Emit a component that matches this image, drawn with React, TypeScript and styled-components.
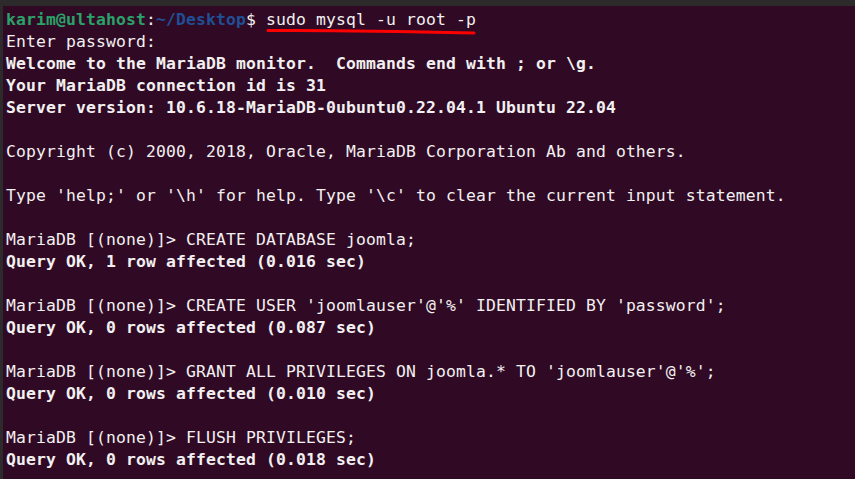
import React from "react";
import styled, { createGlobalStyle } from "styled-components";

const GlobalStyle = createGlobalStyle`
  html, body {
    margin: 0;
    padding: 0;
    background: #300a24;
    overflow: hidden;
  }
`;

const Window = styled.div`
  width: 855px;
  height: 479px;
  display: flex;
  flex-direction: column;
  background: #2b2b2b;
  overflow: hidden;
`;

const TopBar = styled.div`
  height: 6px;
  flex-shrink: 0;
  background: #2c2a2b;
`;

const Screen = styled.div`
  flex: 1;
  margin-left: 3px;
  padding: 3px 0 0 3px;
  background: #300a24;
  font-family: "DejaVu Sans Mono", "Liberation Mono", monospace;
  font-size: 16.4px;
  letter-spacing: 0.13px;
  line-height: 22px;
  color: #f2f0f0;
  white-space: pre;
`;

const Line = styled.div<{ $bold?: boolean }>`
  height: 22px;
  font-weight: ${(p) => (p.$bold ? 700 : 400)};
`;

const PromptLine = styled.div`
  position: relative;
  height: 22px;
`;

const User = styled.span`
  color: #2aa269;
  font-weight: 700;
`;

const Path = styled.span`
  color: #1f4f96;
  font-weight: 700;
`;

const Mark = styled.svg`
  position: absolute;
  left: 256px;
  top: 18px;
  overflow: visible;
`;

type Row = { text: string; bold?: boolean };

const rows: Row[] = [
  { text: "Enter password:" },
  { text: "Welcome to the MariaDB monitor.  Commands end with ; or \\g.", bold: true },
  { text: "Your MariaDB connection id is 31", bold: true },
  { text: "Server version: 10.6.18-MariaDB-0ubuntu0.22.04.1 Ubuntu 22.04", bold: true },
  { text: "" },
  { text: "Copyright (c) 2000, 2018, Oracle, MariaDB Corporation Ab and others." },
  { text: "" },
  { text: "Type 'help;' or '\\h' for help. Type '\\c' to clear the current input statement." },
  { text: "" },
  { text: "MariaDB [(none)]> CREATE DATABASE joomla;" },
  { text: "Query OK, 1 row affected (0.016 sec)", bold: true },
  { text: "" },
  { text: "MariaDB [(none)]> CREATE USER 'joomlauser'@'%' IDENTIFIED BY 'password';" },
  { text: "Query OK, 0 rows affected (0.087 sec)", bold: true },
  { text: "" },
  { text: "MariaDB [(none)]> GRANT ALL PRIVILEGES ON joomla.* TO 'joomlauser'@'%';" },
  { text: "Query OK, 0 rows affected (0.010 sec)", bold: true },
  { text: "" },
  { text: "MariaDB [(none)]> FLUSH PRIVILEGES;" },
  { text: "Query OK, 0 rows affected (0.018 sec)", bold: true },
];

export default function App() {
  return (
    <>
      <GlobalStyle />
      <Window>
        <TopBar />
        <Screen>
          <PromptLine>
            <User>karim@ultahost</User>:<Path>~/Desktop</Path>$ sudo mysql -u root -p
            <Mark width="214" height="8" viewBox="0 0 214 8">
              <path
                d="M6 3.5 C 70 3, 150 4.5, 212 6"
                stroke="#ff0000"
                strokeWidth="3"
                strokeLinecap="round"
                fill="none"
              />
            </Mark>
          </PromptLine>
          {rows.map((r, i) => (
            <Line key={i} $bold={r.bold}>
              {r.text}
            </Line>
          ))}
        </Screen>
      </Window>
    </>
  );
}
